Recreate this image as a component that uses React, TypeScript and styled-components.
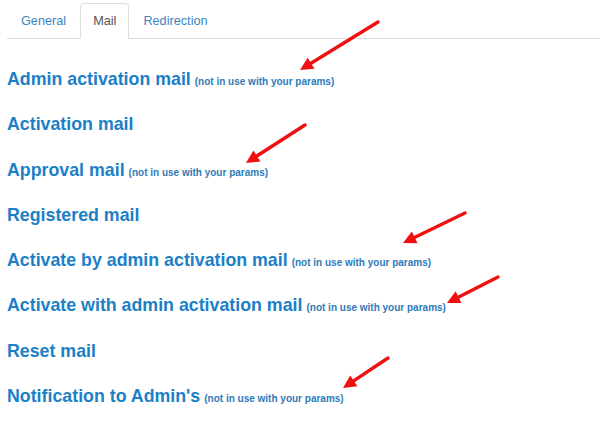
import React from "react";
import styled, { createGlobalStyle } from "styled-components";

const Global = createGlobalStyle`
  html, body { margin: 0; padding: 0; background: #fff; }
  body { font-family: "Liberation Sans", Arial, sans-serif; }
`;

const Page = styled.div`
  position: relative;
  width: 600px;
  height: 432px;
  overflow: hidden;
  background: #fff;
`;

const TabBar = styled.ul`
  list-style: none;
  margin: 3px 0 0 7px;
  padding: 0;
  display: flex;
  border-bottom: 1px solid #dddddd;
  height: 35px;
`;

const Tab = styled.li<{ $active?: boolean }>`
  box-sizing: border-box;
  height: ${(p) => (p.$active ? "36px" : "35px")};
  padding: 0 ${(p) => (p.$active ? "12px" : "13px")};
  display: flex;
  align-items: center;
  font-size: 12.7px;
  color: ${(p) => (p.$active ? "#555555" : "#3a85c4")};
  background: #fff;
  border: 1px solid ${(p) => (p.$active ? "#dddddd" : "transparent")};
  border-bottom-color: ${(p) => (p.$active ? "#fff" : "transparent")};
  border-radius: 4px 4px 0 0;
`;

const List = styled.div`
  display: flex;
  flex-direction: column;
  padding: 28px 0 0 7px;
  gap: 21.3px;
`;

const Row = styled.div`
  display: flex;
  align-items: baseline;
  height: 24px;
  line-height: 24px;
`;

const Title = styled.span`
  font-size: 17.8px;
  font-weight: bold;
  color: #1c80c7;
`;

const Note = styled.span`
  margin-left: 4px;
  font-size: 10px;
  font-weight: bold;
  color: #2f7bb8;
`;

const Overlay = styled.svg`
  position: absolute;
  left: 0;
  top: 0;
  pointer-events: none;
`;

const rows: { title: string; note?: boolean }[] = [
  { title: "Admin activation mail", note: true },
  { title: "Activation mail" },
  { title: "Approval mail", note: true },
  { title: "Registered mail" },
  { title: "Activate by admin activation mail", note: true },
  { title: "Activate with admin activation mail", note: true },
  { title: "Reset mail" },
  { title: "Notification to Admin's", note: true },
];

const arrows = [
  [378, 22, 300, 70],
  [305, 125, 246, 163],
  [465, 213, 403, 243],
  [498, 277, 447, 303],
  [388, 358, 343, 388],
];

function Arrow({ x1, y1, x2, y2 }: { x1: number; y1: number; x2: number; y2: number }) {
  const dx = x2 - x1;
  const dy = y2 - y1;
  const len = Math.hypot(dx, dy);
  const ux = dx / len;
  const uy = dy / len;
  const headLen = 13;
  const headW = 6.5;
  const bx = x2 - ux * headLen;
  const by = y2 - uy * headLen;
  const px = -uy;
  const py = ux;
  const pts = `${x2},${y2} ${bx + px * headW},${by + py * headW} ${bx - px * headW},${by - py * headW}`;
  return (
    <g>
      <line x1={x1} y1={y1} x2={bx + ux * 2} y2={by + uy * 2} stroke="#f01010" strokeWidth={3.4} strokeLinecap="round" />
      <polygon points={pts} fill="#f01010" />
    </g>
  );
}

export default function App() {
  return (
    <Page>
      <Global />
      <TabBar>
        <Tab>General</Tab>
        <Tab $active>Mail</Tab>
        <Tab>Redirection</Tab>
      </TabBar>
      <List>
        {rows.map((r) => (
          <Row key={r.title}>
            <Title>{r.title}</Title>
            {r.note && <Note>(not in use with your params)</Note>}
          </Row>
        ))}
      </List>
      <Overlay width={600} height={432} viewBox="0 0 600 432">
        {arrows.map(([x1, y1, x2, y2], i) => (
          <Arrow key={i} x1={x1} y1={y1} x2={x2} y2={y2} />
        ))}
      </Overlay>
    </Page>
  );
}
